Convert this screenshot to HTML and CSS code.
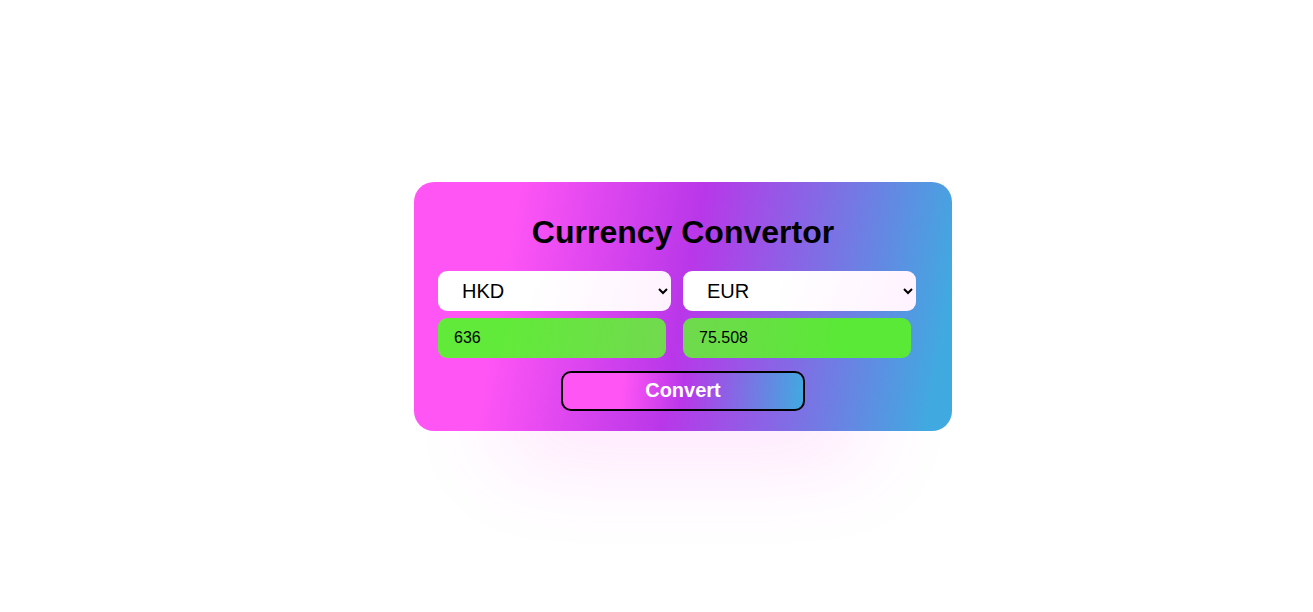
FILE: index.html
```html
<!DOCTYPE html>
<html lang="en">
<head>
<meta charset="utf-8">
<title>Currency Convertor</title>
<link rel="stylesheet" href="styles.css">
</head>
<body>
<div class="card">
  <h1 class="title">Currency Convertor</h1>
  <div class="row">
    <select class="sel">
      <option>HKD</option>
    </select>
    <select class="sel">
      <option>EUR</option>
    </select>
  </div>
  <div class="row">
    <input class="amt" type="text" value="636">
    <input class="amt amt-r" type="text" value="75.508">
  </div>
  <div class="actions">
    <button class="btn">Convert</button>
  </div>
</div>
</body>
</html>
```
FILE: styles.css
```css
html, body {
  margin: 0;
  padding: 0;
  background: #fff;
}
body {
  min-height: 100vh;
  display: flex;
  align-items: center;
  justify-content: center;
  padding-left: 53px;
  box-sizing: border-box;
  font-family: "Liberation Sans", Arial, sans-serif;
}
.card {
  width: 538px;
  height: 249px;
  box-sizing: border-box;
  padding: 30px 36px 21px 24px;
  border-radius: 20px;
  background: linear-gradient(100deg, #ff55f5 18%, #b937e9 50%, #40aae0 96%);
  box-shadow: 0 115px 90px -90px rgba(255, 85, 245, 0.18);
}
.title {
  margin: 0 0 19px 12px;
  font-size: 32px;
  font-weight: bold;
  text-align: center;
  line-height: 40px;
  color: #000;
}
.row {
  display: flex;
  gap: 12px;
  margin-bottom: 7px;
}
.sel {
  width: 233px;
  height: 40px;
  border: none;
  border-radius: 9px;
  background: linear-gradient(110deg, #ffffff 40%, #fff2ff 100%);
  font-family: "Liberation Sans", Arial, sans-serif;
  font-size: 20px;
  color: #000;
  padding: 0 6px 0 20px;
  outline: none;
}
.amt {
  width: 228px;
  height: 40px;
  box-sizing: border-box;
  border: none;
  border-radius: 9px;
  background: linear-gradient(100deg, #62ea3a 30%, #72d94f 100%);
  font-family: "Liberation Sans", Arial, sans-serif;
  font-size: 16px;
  color: #000;
  padding: 0 16px;
  margin-right: 5px;
  outline: none;
}
.amt-r {
  background: linear-gradient(100deg, #70d94e 0%, #5ae936 70%);
}
.actions {
  display: flex;
  justify-content: center;
  padding-left: 12px;
  margin-top: 13px;
}
.btn {
  width: 244px;
  height: 40px;
  border: 2px solid #000;
  border-radius: 10px;
  background: linear-gradient(95deg, #ff55f5 25%, #b937e9 50%, #40aae0 100%);
  color: #fff;
  font-family: "Liberation Sans", Arial, sans-serif;
  font-size: 20px;
  font-weight: bold;
  cursor: pointer;
}
```
